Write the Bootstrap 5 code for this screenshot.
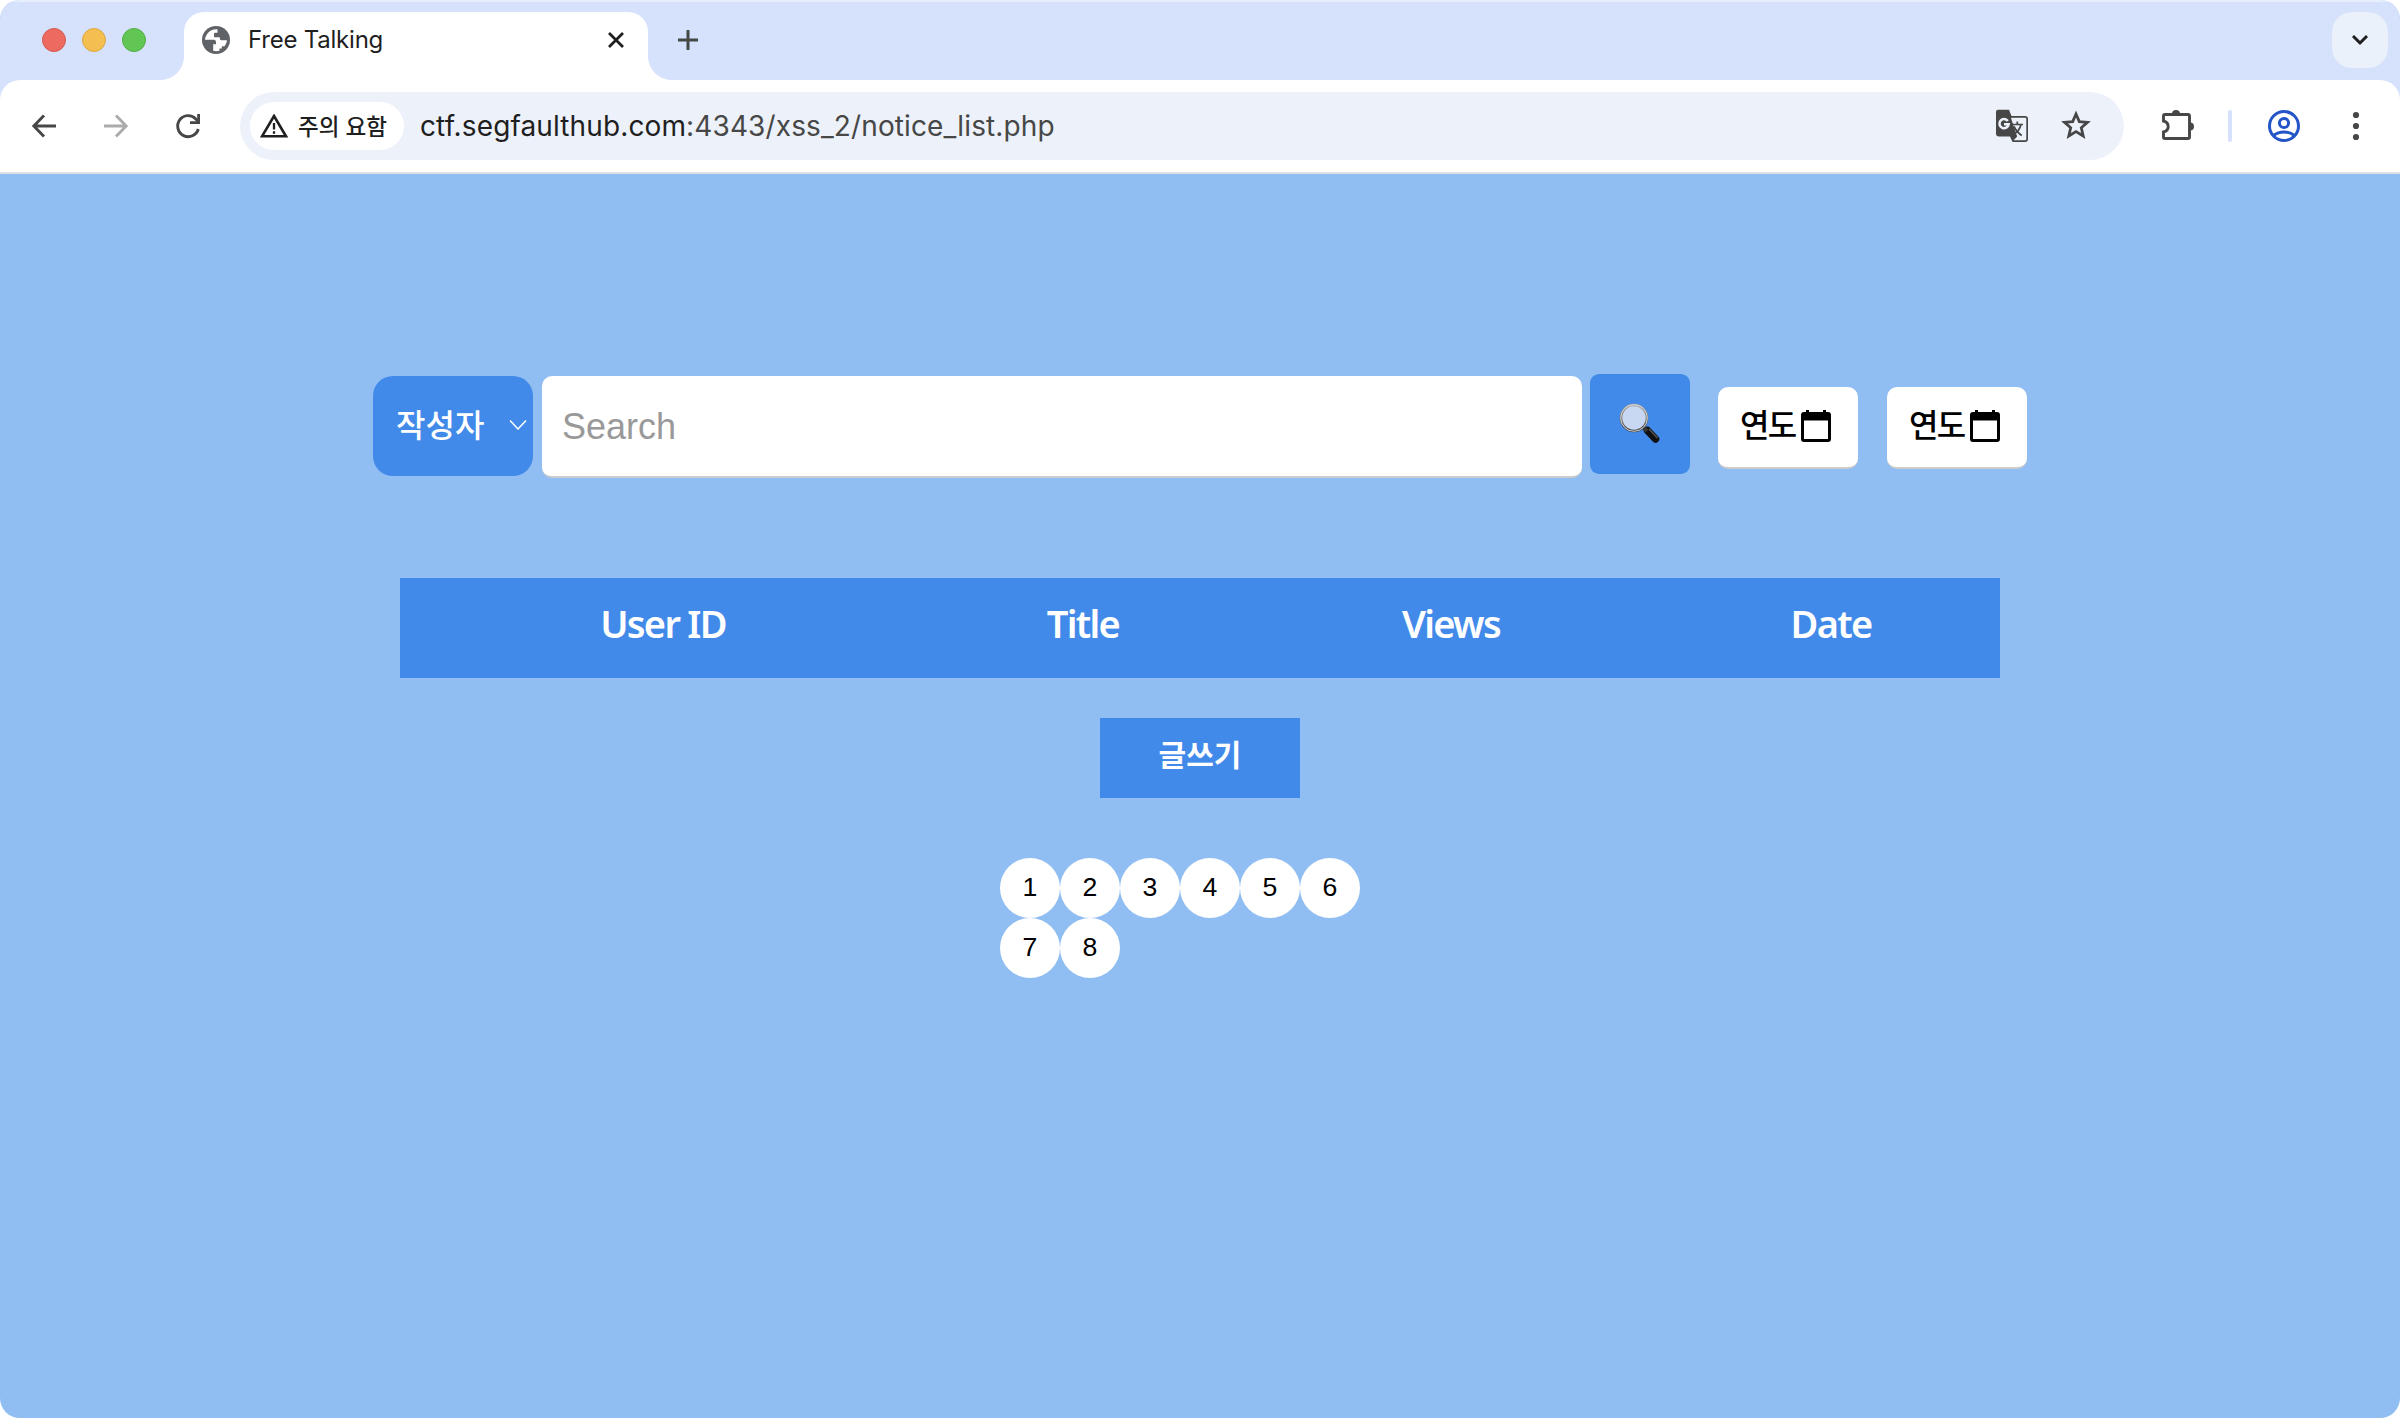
<!DOCTYPE html>
<html lang="ko">
<head>
<meta charset="utf-8">
<title>Free Talking</title>
<link href="https://cdn.jsdelivr.net/npm/bootstrap@5.3.0/dist/css/bootstrap.min.css" rel="stylesheet">
<style>
body{font-family:"Noto Sans CJK KR","Liberation Sans",sans-serif;background:#fff;color:#1f1f1f;overflow:hidden}
.win{width:2400px;height:1418px;border-radius:20px;background:#90bdf2}
svg{display:block;flex:none}
.tabstrip{height:80px;background:#d6e1fc;box-shadow:inset 0 2px #e6edfb;padding:12px 12px 0 42px}
.light{width:24px;height:24px;border-radius:50%;border:1px solid}
.light+.light{margin-left:16px}
.l-red{background:#ec6a5f;border-color:#d5594f}
.l-yel{background:#f4bf50;border-color:#dba844}
.l-grn{background:#62c654;border-color:#54ae46}
.tab{width:464px;height:68px;margin-left:38px;background:#fff;border-radius:20px 20px 0 0;padding:0 24px 12px 18px;position:relative}
.tab::before,.tab::after{content:"";position:absolute;bottom:0;width:24px;height:24px}
.tab::before{left:-24px;background:radial-gradient(circle at 0 0,transparent 23.5px,#fff 24.5px)}
.tab::after{right:-24px;background:radial-gradient(circle at 100% 0,transparent 23.5px,#fff 24.5px)}
.tab-title{font:400 24px/30px Inter,sans-serif;margin-left:18px;letter-spacing:-.22px}
.tabmenu{width:56px;height:56px;border-radius:20px;background:#eaf1fb}
.tool-wrap{background:#d6e1fc}
.toolbar{height:94px;background:#fff;border-bottom:2px solid #dfe1e0;border-radius:20px 20px 0 0;padding:0 32px 0 28px}
.omni{width:1884px;height:68px;border-radius:34px;background:#edf2fa;padding:0 32px 0 10px;margin-left:36px}
.chip{width:154px;height:48px;border-radius:24px;background:#fff;padding-left:10px;font-size:22.5px;line-height:44px;font-weight:500}
.chip span{margin:-3px 0 0 9px;white-space:nowrap;letter-spacing:-.05px}
.url{font:400 28px/34px Inter,sans-serif;margin-left:16px;color:#474747;letter-spacing:.12px}
.url b{font-weight:400;color:#1f1f1f}
.searchbar{padding:200px 0 0 373px}
.field{background:#fff;border-radius:10px;border-bottom:2px solid #ccc}
.kind{width:160px;height:100px;margin-top:2px;border-radius:20px;background:#428aea;color:#fff;font-size:32px;font-weight:500;line-height:94px;padding:0 6px 5px 23px}
.kind span{margin-top:-1px}
.query{width:1040px;height:102px;margin:2px 8px 0 9px;padding:1px 20px 0 20px;border-width:0 0 2px;border-style:solid;font:36px "Liberation Sans",sans-serif;outline:0}
.query::placeholder{color:#999;opacity:1}
.go{width:100px;height:100px;border-radius:9px;background:#428aea}
.datebox{width:140px;height:82px;margin:13px 0 0 28px;padding:0 27px 3px 22px;color:#000;font-size:32px;font-weight:500;line-height:48px}
.datebox+.datebox{margin-left:29px}
.datebox span{white-space:nowrap;letter-spacing:-1.8px;margin-top:-6px}
.notices{width:1600px;margin:100px auto 0;table-layout:fixed}
.notices th{height:100px;padding:0 0 10px;background:#428aea;color:#fff;text-align:center;vertical-align:middle;font:600 38px/50px "Noto Sans",sans-serif;letter-spacing:-1.7px}
.write{width:200px;height:80px;margin-top:40px;background:#428aea;color:#fff;font-size:30px;font-weight:700;line-height:71px;text-align:center}
.pages{width:400px;margin-top:60px}
.pages a{width:60px;height:60px;border-radius:50%;background:#fff;color:#000;font:26.67px/59px "Liberation Sans",sans-serif;text-align:center;text-decoration:none}
</style>
<script src="https://cdn.jsdelivr.net/npm/bootstrap@5.3.0/dist/js/bootstrap.bundle.min.js"></script>
</head>
<body>
<div class="win overflow-hidden">
  <header>
    <div class="tabstrip d-flex">
      <div class="d-flex align-items-center pb-2 mb-1">
        <div class="light l-red"></div><div class="light l-yel"></div><div class="light l-grn"></div>
      </div>
      <div class="tab d-flex align-items-center">
        <svg width="28" height="28" viewBox="0 0 28 28"><circle cx="14" cy="14" r="14" fill="#5f6368"/><path d="M15.5 3.2C9 2.500 3.500 7.500 3 13.800H12.200Q14 14 14 16V18.200H11.200V24.800Q14.500 25.600 17.500 24.700V22.600H19.800V20.200H22.600Q24.800 17.500 25 14.300H19.300Q17.800 14.300 17.800 12.600V11.300H12V7.500Q12 6.800 13.500 6.800H15.500Z" fill="#fff"/></svg>
        <span class="tab-title">Free Talking</span>
        <svg class="ms-auto" width="17" height="16" viewBox="0 0 17 16"><path d="M2 1 16 15M16 1 2 15" stroke="#1f1f1f" stroke-width="2.800"/></svg>
      </div>
      <svg width="20" height="20" viewBox="0 0 20 20" style="margin:18px 0 0 30px"><path d="M10 0V20M0 10H20" stroke="#474747" stroke-width="3"/></svg>
      <div class="tabmenu ms-auto d-flex align-items-center justify-content-center">
        <svg width="18" height="12" viewBox="0 0 18 12"><path d="M2 2 9 9 16 2" fill="none" stroke="#1f1f1f" stroke-width="3"/></svg>
      </div>
    </div>
    <div class="tool-wrap">
      <div class="toolbar d-flex align-items-center">
        <svg width="32" height="32" viewBox="0 0 32 32"><path d="M28 16H6M16 5.500 5.800 16 16 26.500" fill="none" stroke="#474747" stroke-width="2.900"/></svg>
        <svg width="32" height="32" viewBox="0 0 32 32" style="margin-left:40px"><path d="M4 16H26M16 5.500 26.200 16 16 26.500" fill="none" stroke="#ababab" stroke-width="2.900"/></svg>
        <svg width="32" height="32" viewBox="0 0 32 32" style="margin-left:40px"><path d="M26.300 19A10.500 10.500 0 1 1 23.800 8.900L26.500 11.800" fill="none" stroke="#474747" stroke-width="2.900"/><path d="M28 4V14H18V11.200H25.200V4Z" fill="#474747"/></svg>
        <div class="omni d-flex align-items-center">
          <div class="chip d-flex align-items-center">
            <svg width="29" height="25" viewBox="0 0 29 25"><path d="M14 2 26 22.300H2Z" fill="none" stroke="#1f1f1f" stroke-width="2.600"/><path d="M14 9V15.500M14 17.300V19.700" stroke="#1f1f1f" stroke-width="2.300"/></svg>
            <span>주의 요함</span>
          </div>
          <div class="url"><b>ctf.segfaulthub.com</b>:4343/xss_2/notice_list.php</div>
          <svg class="ms-auto" width="34" height="34" viewBox="0 0 34 34"><path d="M3 .8H14L16.500 7H30Q33 7 33 10V30Q33 33 30 33H17.500L15 27.500H4Q1 27.500 1 24.500V3Q1 .8 3 .8Z" fill="#474747"/><path d="M17.200 8.700H30Q31.300 8.700 31.300 10V30Q31.300 31.300 30 31.300H18.500L22 27.500 16 9Z" fill="#edf2fa"/><path d="M14.800 9 20.800 27.500H15.500L18 31.500 22 27.500" fill="#474747"/><path d="M12.800 12A4.600 4.600 0 1 0 13.600 15.300H9" fill="none" stroke="#edf2fa" stroke-width="2.600"/><path d="M16.500 15.500H28M22.300 12.500V15.500M26 15.500Q24.500 22 18.500 25.500M19 17.500Q22 23.500 26.800 26.500" fill="none" stroke="#474747" stroke-width="1.700"/></svg>
          <svg width="32" height="32" viewBox="0 0 32 32" style="margin-left:31px"><path d="M16 4 19.300 11.600 27.500 12.400 21.300 17.800 23.200 26 16 21.600 8.800 26 10.700 17.800 4.500 12.400 12.700 11.600Z" fill="none" stroke="#474747" stroke-width="2.800"/></svg>
        </div>
        <svg width="34" height="34" viewBox="0 0 34 34" style="margin-left:37px"><path d="M4 5.500H27Q28.500 5.500 28.500 7V28Q28.500 29.500 27 29.500H4Q2.500 29.500 2.500 28V23Q7.200 21.800 7.200 17.500T2.500 12V7Q2.500 5.500 4 5.500Z" fill="none" stroke="#474747" stroke-width="2.900"/><path d="M11 5A4 4 0 0 1 19 5ZM29 13.500A4 4 0 0 1 29 21.500Z" fill="#474747"/></svg>
        <div style="width:4px;height:32px;border-radius:2px;background:#d6e1fc;margin-left:33px"></div>
        <svg width="32" height="32" viewBox="0 0 32 32" style="margin-left:36px" fill="none" stroke="#2455c8" stroke-width="3"><circle cx="16" cy="16" r="14.500"/><circle cx="16" cy="13" r="4.600"/><path d="M5.500 25.500Q10 22 16 22T26.500 25.500"/></svg>
        <svg class="ms-auto" width="24" height="32" viewBox="0 0 24 32" fill="#474747"><circle cx="12" cy="5" r="3.100"/><circle cx="12" cy="16" r="3.100"/><circle cx="12" cy="27" r="3.100"/></svg>
      </div>
    </div>
  </header>
  <main>
    <form class="searchbar d-flex align-items-start">
      <div class="kind d-flex align-items-center justify-content-between" role="button"><span>작성자</span>
        <svg width="18" height="12" viewBox="0 0 18 12"><path d="M1 2.500 9 11 17 2.500" fill="none" stroke="#fff" stroke-width="1.500"/></svg></div>
      <input class="field query" type="text" placeholder="Search">
      <div class="go d-flex align-items-center justify-content-center" role="button">
        <svg width="42" height="42" viewBox="0 0 42 42">
          <defs><linearGradient id="rim" x1="0" y1="0" x2="0" y2="1"><stop offset="0" stop-color="#aaa"/><stop offset="1" stop-color="#444"/></linearGradient></defs>
          <path d="M28.500 27.500 36.500 36" stroke="#111" stroke-width="7.500" stroke-linecap="round"/><path d="M30 26 38.500 35" stroke="#555" stroke-width="1.500"/><path d="M24 24 28 28" stroke="#333" stroke-width="4"/>
          <circle cx="15" cy="15" r="13" fill="#c8d8f2" stroke="url(#rim)" stroke-width="2.600"/><circle cx="15" cy="15" r="13.300" fill="none" stroke="#ddd" stroke-width=".9"/></svg>
      </div>
      <div class="field datebox d-flex align-items-center justify-content-between"><span>연도</span><svg width="30" height="32" viewBox="0 0 30 32"><path fill-rule="evenodd" d="M5 0H8V2H22V0H25V2H27Q30 2 30 5V29Q30 32 27 32H3Q0 32 0 29V5Q0 2 3 2H5ZM3 10.500V29H27V10.500Z" fill="#000"/></svg></div>
      <div class="field datebox d-flex align-items-center justify-content-between"><span>연도</span><svg width="30" height="32" viewBox="0 0 30 32"><path fill-rule="evenodd" d="M5 0H8V2H22V0H25V2H27Q30 2 30 5V29Q30 32 27 32H3Q0 32 0 29V5Q0 2 3 2H5ZM3 10.500V29H27V10.500Z" fill="#000"/></svg></div>
    </form>
    <table class="notices">
      <colgroup><col style="width:526px"><col style="width:314px"><col style="width:422px"><col style="width:338px"></colgroup>
      <thead><tr><th>User ID</th><th>Title</th><th>Views</th><th>Date</th></tr></thead>
    </table>
    <div class="write mx-auto">글쓰기</div>
    <nav class="pages mx-auto d-flex flex-wrap">
      <a href="#">1</a><a href="#">2</a><a href="#">3</a><a href="#">4</a><a href="#">5</a><a href="#">6</a><a href="#">7</a><a href="#">8</a>
    </nav>
  </main>
</div>
</body>
</html>
